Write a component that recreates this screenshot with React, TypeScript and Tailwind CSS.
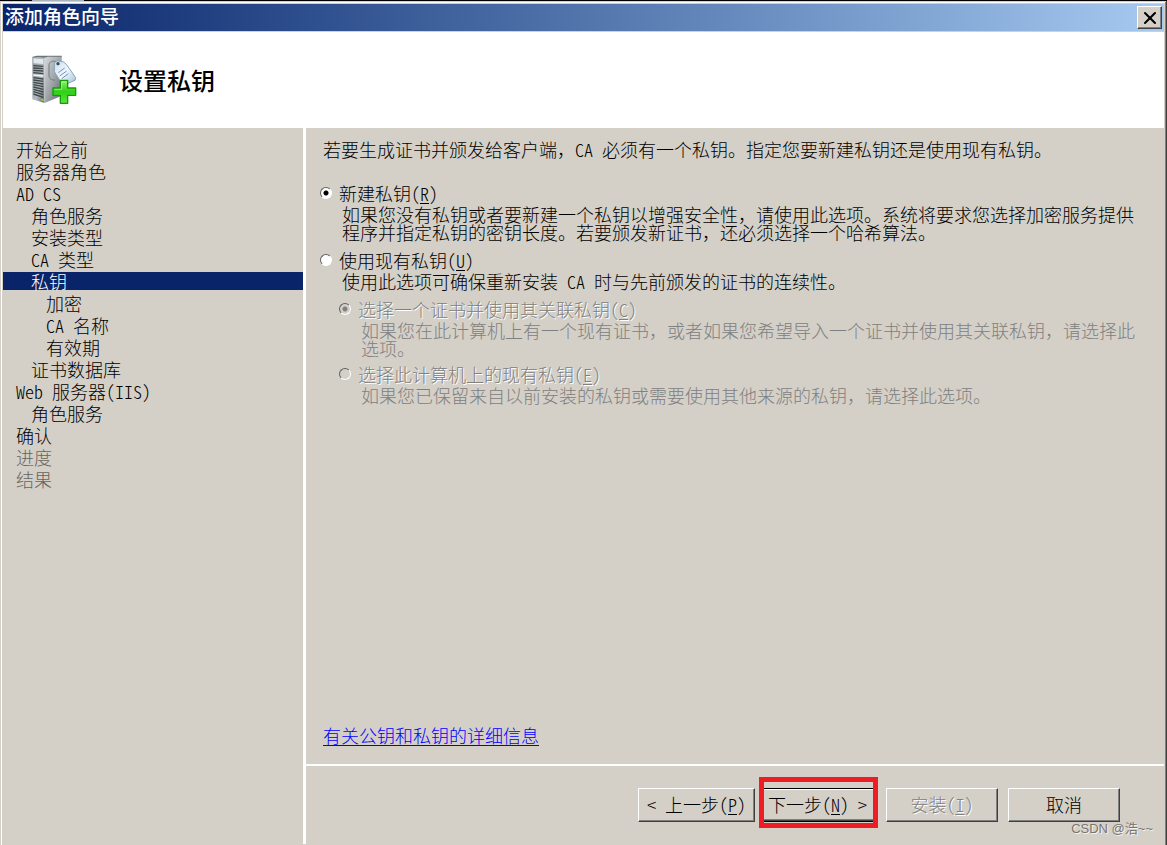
import { X } from "lucide-react";
import type { ReactNode } from "react";

type Step = {
  label: string;
  level: number;
  state?: "current" | "pending";
};

const steps: Step[] = [
  { label: "开始之前", level: 0 },
  { label: "服务器角色", level: 0 },
  { label: "AD CS", level: 0 },
  { label: "角色服务", level: 1 },
  { label: "安装类型", level: 1 },
  { label: "CA 类型", level: 1 },
  { label: "私钥", level: 1, state: "current" },
  { label: "加密", level: 2 },
  { label: "CA 名称", level: 2 },
  { label: "有效期", level: 2 },
  { label: "证书数据库", level: 1 },
  { label: "Web 服务器(IIS)", level: 0 },
  { label: "角色服务", level: 1 },
  { label: "确认", level: 0 },
  { label: "进度", level: 0, state: "pending" },
  { label: "结果", level: 0, state: "pending" },
];

const indents = ["pl-[13px]", "pl-7", "pl-[43px]"];

const raised =
  "border border-t-white border-l-white border-r-[#404040] border-b-[#404040] shadow-[inset_-1px_-1px_0_#808080]";

const etched = "text-[#808080] [text-shadow:1px_1px_0_#fff]";

// Latin runs use the font's half-width forms.
// "&" marks the access key, as in a Windows resource string.
const Mixed = ({ text }: { text: string }) => (
  <span>
    {text.split(/([\x20-\x7e]+)/).map((run, i) => {
      if (i % 2 === 0) return run;

      const [before, after] = run.split("&");

      return (
        <span key={i} className="[font-feature-settings:'hwid']">
          {before}
          {after && (
            <>
              <u className="underline-offset-2">{after[0]}</u>
              {after.slice(1)}
            </>
          )}
        </span>
      );
    })}
  </span>
);

const ServerIcon = () => (
  <svg width="48" height="50" viewBox="0 0 144 150" aria-hidden="true">
    <defs>
      <linearGradient id="front" x1="0" y1="0" x2="1" y2="1">
        <stop offset="0" stopColor="#8b9499" />
        <stop offset="0.6" stopColor="#b4babd" />
        <stop offset="1" stopColor="#5d6367" />
      </linearGradient>
      <linearGradient id="side" x1="0" y1="0" x2="1" y2="1">
        <stop offset="0" stopColor="#d5d8da" />
        <stop offset="0.5" stopColor="#a0a5a8" />
        <stop offset="1" stopColor="#5c6165" />
      </linearGradient>
      <linearGradient id="tag" x1="0" y1="0" x2="1" y2="1">
        <stop offset="0" stopColor="#c7dcec" />
        <stop offset="0.5" stopColor="#f2f8fd" />
        <stop offset="1" stopColor="#9dbfdc" />
      </linearGradient>
      <linearGradient id="plus" x1="0" y1="0" x2="0" y2="1">
        <stop offset="0" stopColor="#8cf06a" />
        <stop offset="0.5" stopColor="#2fd016" />
        <stop offset="1" stopColor="#5be63c" />
      </linearGradient>
    </defs>
    <path d="M4 5 18 2H92V7L41 9Z" fill="#6b7377" />
    <path d="M41 8 50 5H92V122L41 144Z" fill="url(#side)" />
    <path d="M4 5 41 8V144L4 133Z" fill="url(#front)" />
    <path d="M41 8V144" stroke="#d8dbdd" strokeWidth="2" />
    <path d="M7 10 37 12V27L7 25Z" fill="#dfe9ee" />
    <path
      d="M7 32 37 34M7 39 37 41M7 46 37 48M7 53 37 56M7 68 37 72M7 75 37 79M7 82 37 87M7 89 37 95M7 96 37 103M7 103 37 111M7 110 37 119M7 117 37 127"
      stroke="#3f474b"
      strokeWidth="4"
    />
    <path d="M7 60 37 63" stroke="#f0f3f4" strokeWidth="4" />
    <rect x="31" y="132" width="7" height="6" fill="#73e01c" />
    <path
      d="M79 22C70 16 57 18 54 28V60C54 72 62 76 72 75"
      fill="none"
      stroke="#71797d"
      strokeWidth="3"
    />
    <path
      d="M70 24 78 17 98 21 106 28 134 68 132 76 103 88 92 84 70 50Z"
      fill="url(#tag)"
      stroke="#84a3bc"
      strokeWidth="3"
      strokeLinejoin="round"
    />
    <circle cx="81" cy="26" r="5" fill="#3d4a54" />
    <path
      d="M82 53 101 39M86 63 107 48M92 71 112 56"
      stroke="#6f91ba"
      strokeWidth="3"
    />
    <path
      d="M88 76H110V99H134V121H110V145H88V121H66V99H88Z"
      fill="url(#plus)"
      stroke="#159c08"
      strokeWidth="4"
      strokeLinejoin="round"
    />
    <path d="M92 81H106M92 81V103H70" fill="none" stroke="#b6f7a0" strokeWidth="2" />
  </svg>
);

type OptionProps = {
  name: string;
  label: string;
  description: string;
  checked?: boolean;
  disabled?: boolean;
  className?: string;
  children?: ReactNode;
};

const Option = ({
  name,
  label,
  description,
  checked,
  disabled,
  className = "",
  children,
}: OptionProps) => (
  <div className={className}>
    <label className="flex items-start gap-[7px]">
      <input
        type="radio"
        name={name}
        defaultChecked={checked}
        disabled={disabled}
        className="mt-[3px] size-3 shrink-0 appearance-none rounded-full border border-t-[#606060] border-r-white border-b-white border-l-[#606060] bg-white checked:bg-[radial-gradient(circle,#000_2px,#fff_3px)] disabled:bg-[#d4d0c8] disabled:checked:bg-[radial-gradient(circle,#808080_2px,#d4d0c8_3px)]"
      />
      <span className={disabled ? etched : ""}>
        <Mixed text={label} />
      </span>
    </label>
    <p
      className={`mt-[3px] pl-[22px] ${disabled ? "text-[#808080]" : ""}`}
    >
      <Mixed text={description} />
    </p>
    {children}
  </div>
);

const App = () => {
  return (
    <div className="relative flex min-h-screen flex-col bg-[#d4d0c8] font-['Noto_Sans_CJK_SC',sans-serif] text-[18px] leading-[18px] font-light text-black">
      <div className="h-px bg-black">
        <div className="ml-8 h-px w-13 bg-[#a9b4ba]" />
      </div>

      <div className="flex grow flex-col border-r border-[#404040] pt-px">
        <div className="flex grow flex-col border-r border-[#808080] pl-px">
          <div className="flex grow flex-col border-t border-l border-white px-px pt-px pb-px">
            <div className="flex h-[27px] items-center justify-between bg-linear-to-r from-[#0a246a] to-[#a6caf0] pr-[2px] pl-[2px]">
              <span className="pb-[3px] text-[19px] font-medium text-white">
                添加角色向导
              </span>
              <button
                type="button"
                aria-label="关闭"
                className={`flex h-[23px] w-[25px] items-center justify-center bg-[#d4d0c8] ${raised}`}
              >
                <X size={20} strokeWidth={2.5} />
              </button>
            </div>

            <header className="mt-px flex h-24 items-center gap-10 bg-white pl-7">
              <ServerIcon />
              <h1 className="text-[24px] leading-8 font-medium">设置私钥</h1>
            </header>

            <div className="flex grow">
              <nav className="w-[303px] shrink-0 border-r-3 border-white pt-3">
                <ul className="flex flex-col gap-1">
                  {steps.map((step, i) => (
                    <li
                      key={i}
                      aria-current={
                        step.state === "current" ? "step" : undefined
                      }
                      className={`${indents[step.level]} ${
                        step.state === "current"
                          ? "bg-[#0a246a] text-white"
                          : step.state === "pending"
                          ? "text-[#66645e]"
                          : ""
                      }`}
                    >
                      <Mixed text={step.label} />
                    </li>
                  ))}
                </ul>
              </nav>

              <div className="flex min-w-0 grow flex-col">
                <main className="flex grow flex-col pt-3 pr-5 pb-5 pl-3.5">
                  <p className="pl-[3px]">
                    <Mixed text="若要生成证书并颁发给客户端，CA 必须有一个私钥。指定您要新建私钥还是使用现有私钥。" />
                  </p>

                  <Option
                    name="key"
                    label="新建私钥(&R)"
                    description="如果您没有私钥或者要新建一个私钥以增强安全性，请使用此选项。系统将要求您选择加密服务提供程序并指定私钥的密钥长度。若要颁发新证书，还必须选择一个哈希算法。"
                    checked
                    className="mt-[26px]"
                  />

                  <Option
                    name="key"
                    label="使用现有私钥(&U)"
                    description="使用此选项可确保重新安装 CA 时与先前颁发的证书的连续性。"
                    className="mt-2.5"
                  >
                    <Option
                      name="existing"
                      label="选择一个证书并使用其关联私钥(&C)"
                      description="如果您在此计算机上有一个现有证书，或者如果您希望导入一个证书并使用其关联私钥，请选择此选项。"
                      checked
                      disabled
                      className="mt-2.5 pl-[19px]"
                    />
                    <Option
                      name="existing"
                      label="选择此计算机上的现有私钥(&E)"
                      description="如果您已保留来自以前安装的私钥或需要使用其他来源的私钥，请选择此选项。"
                      disabled
                      className="mt-2 pl-[19px]"
                    />
                  </Option>

                  <a
                    href="#"
                    className="mt-auto ml-[3px] self-start text-[#0000ff] underline underline-offset-2"
                  >
                    有关公钥和私钥的详细信息
                  </a>
                </main>

                <footer className="flex h-20 items-start justify-end border-t-2 border-white pt-[22px] pr-11">
                  <button
                    type="button"
                    className={`h-[34px] w-[117px] pb-0.5 ${raised}`}
                  >
                    <Mixed text="< 上一步(&P)" />
                  </button>
                  <div className="relative ml-[5px]">
                    <button
                      type="button"
                      className="h-[34px] w-[117px] border border-black pr-0.5 pb-0.5 shadow-[inset_0_1px_0_#fff,inset_0_-1px_0_#404040,inset_0_-2px_0_#808080]"
                    >
                      <Mixed text="下一步(&N) >" />
                    </button>
                    <div className="pointer-events-none absolute -inset-x-px -top-[11px] -bottom-1.5 border-5 border-[#ee1c24]" />
                  </div>
                  <button
                    type="button"
                    disabled
                    className={`ml-[9px] h-[34px] w-28 pb-0.5 ${raised} ${etched}`}
                  >
                    <Mixed text="安装(&I)" />
                  </button>
                  <button
                    type="button"
                    className={`ml-2.5 h-[34px] w-28 pb-0.5 ${raised}`}
                  >
                    取消
                  </button>
                </footer>
              </div>
            </div>
          </div>
        </div>
      </div>

      <span className="absolute right-3.5 bottom-[7px] font-['Liberation_Sans','Noto_Sans_CJK_SC',sans-serif] text-[13px] font-normal text-[#77756f] [text-shadow:1px_1px_0_#f4f2ee]">
        CSDN @浩~~
      </span>
    </div>
  );
};

export default App;
